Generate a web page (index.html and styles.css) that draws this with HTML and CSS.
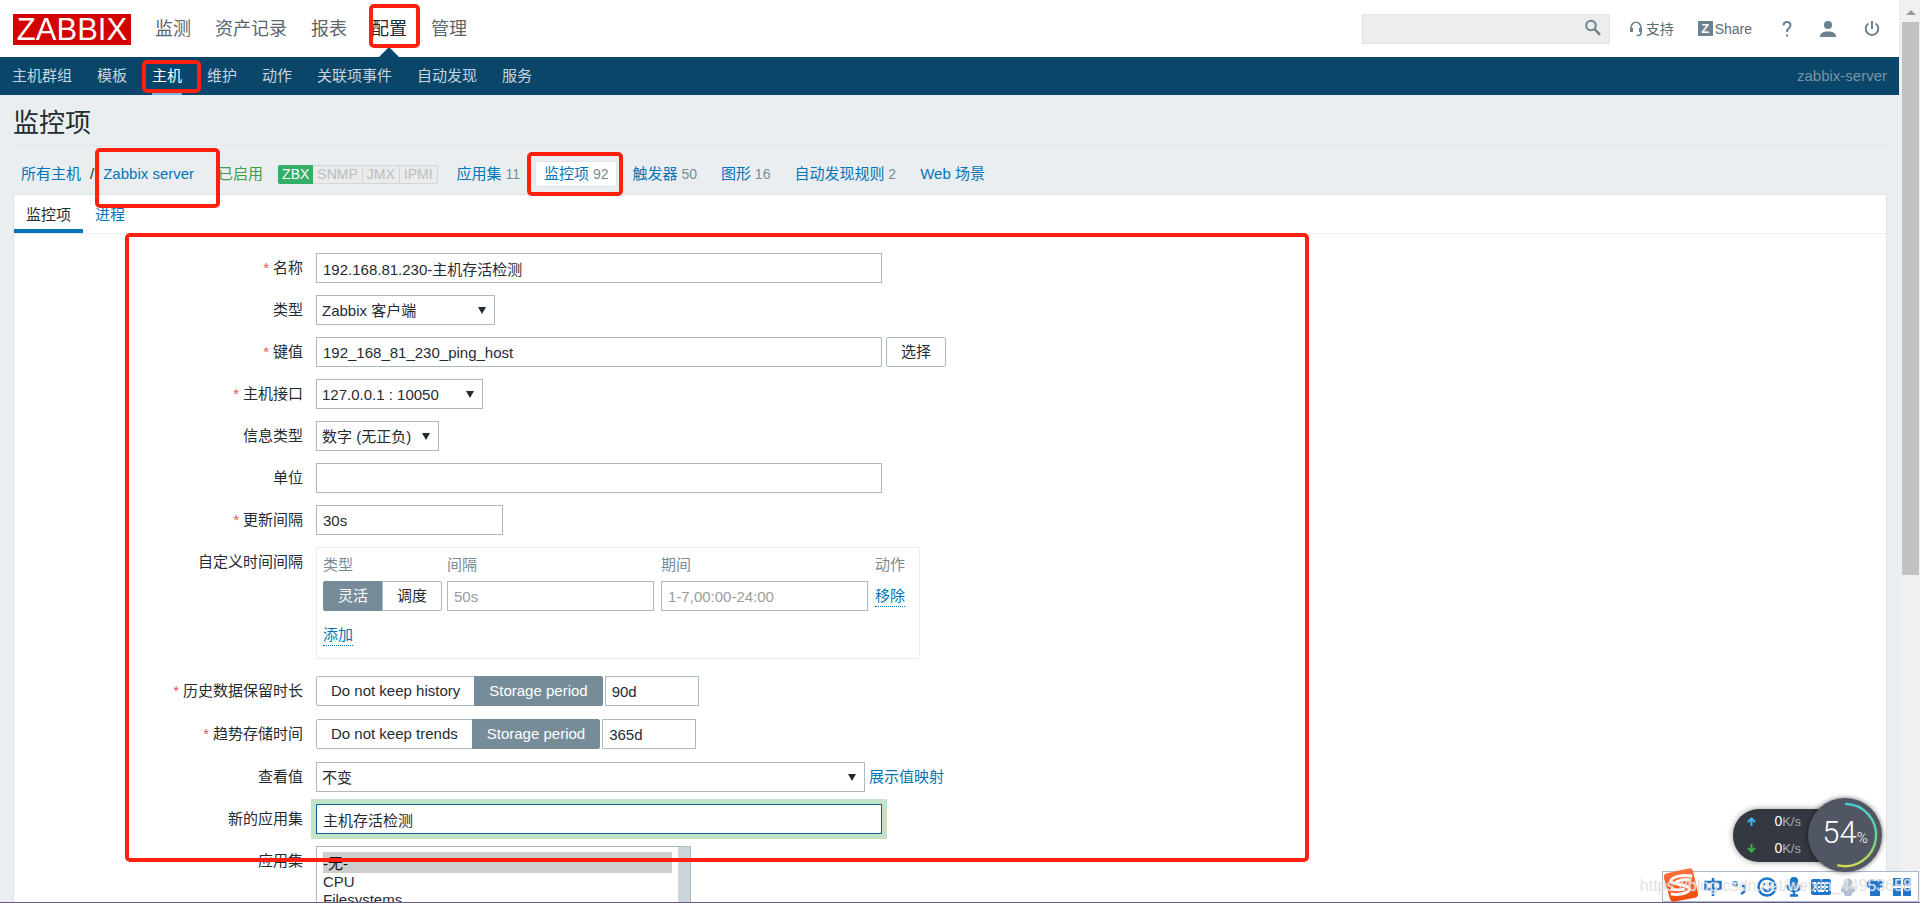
FILE: index.html
```html
<!DOCTYPE html>
<html lang="zh-CN">
<head>
<meta charset="utf-8">
<title>监控项的配置</title>
<link rel="stylesheet" href="styles.css">
</head>
<body>
<div class="viewport">
  <div class="page">
    <header class="top">
      <a class="logo" href="#">ZABBIX</a>
      <nav class="main-nav">
        <a href="#">监测</a><a href="#">资产记录</a><a href="#">报表</a><a href="#" class="active">配置</a><a href="#">管理</a>
      </nav>
      <div class="top-tools">
        <div class="search">
          <input type="text" aria-label="搜索">
          <button type="button" aria-label="搜索">
            <svg width="16" height="17" viewBox="0 0 16 17" fill="none" stroke="#6b8290" stroke-width="2"><circle cx="6" cy="6.500" r="4.800"/><path d="M9.500 10l5.500 5.800" stroke-width="2.500"/></svg>
          </button>
        </div>
        <a class="support" href="#">
          <svg width="14" height="16" viewBox="0 0 14 16" fill="none" stroke="#6b8290" stroke-width="1.600"><path d="M2 10V6.500a5 5.200 0 0 1 10 0V12q0 2.500-3 2.500H7.500"/><path d="M2.500 7v4M11.500 7v4" stroke-width="3"/></svg>
          支持</a>
        <a class="share" href="#"><span class="z-mark">Z</span>Share</a>
        <a class="icon help" href="#" aria-label="帮助"><svg width="10" height="16" viewBox="0 0 10 16" fill="none" stroke="#6b8290" stroke-width="2"><path d="M1.500 4.500C1.500 2.500 3 1 5 1s3.500 1.300 3.500 3.200C8.500 7 5 7 5 11"/><path d="M5 13.500v2"/></svg></a>
        <a class="icon" href="#" aria-label="用户"><svg width="16" height="16" viewBox="0 0 16 16" fill="#6b8290"><circle cx="8" cy="4" r="4"/><path d="M0 16c0-4 3-5.500 8-5.500S16 12 16 16z"/></svg></a>
        <a class="icon" href="#" aria-label="登出"><svg width="16" height="16" viewBox="0 0 16 16" fill="none" stroke="#6b8290" stroke-width="2"><path d="M8 0v8M4.500 2.500a6.300 6.300 0 1 0 7 0"/></svg></a>
      </div>
    </header>
    <nav class="sub-nav">
      <a href="#">主机群组</a><a href="#">模板</a><a href="#" class="active">主机</a><a href="#">维护</a><a href="#">动作</a><a href="#">关联项事件</a><a href="#">自动发现</a><a href="#">服务</a>
      <span class="server-name">zabbix-server</span>
    </nav>
    <main>
      <h1>监控项</h1>
      <div class="crumbs">
        <a href="#">所有主机</a><span class="slash">/</span><a class="host" href="#">Zabbix server</a><span class="enabled">已启用</span>
        <span class="badges"><span class="on">ZBX</span><span>SNMP</span><span>JMX</span><span>IPMI</span></span>
        <span class="crumb"><a href="#">应用集</a> 11</span>
        <span class="crumb current"><a href="#">监控项</a> 92</span>
        <span class="crumb"><a href="#">触发器</a> 50</span>
        <span class="crumb"><a href="#">图形</a> 16</span>
        <span class="crumb"><a href="#">自动发现规则</a> 2</span>
        <span class="crumb"><a href="#">Web 场景</a></span>
      </div>
      <section class="panel">
        <div class="tabs"><a href="#" class="active">监控项</a><a href="#">进程</a></div>
        <form>
          <label for="name" class="required">名称</label>
          <div class="field"><input id="name" class="wide" type="text" value="192.168.81.230-主机存活检测"></div>
          <label for="type">类型</label>
          <div class="field"><span class="select type"><select id="type"><option>Zabbix 客户端</option></select></span></div>
          <label for="key" class="required">键值</label>
          <div class="field"><input id="key" class="wide" type="text" value="192_168_81_230_ping_host"><button type="button" class="plain">选择</button></div>
          <label for="iface" class="required">主机接口</label>
          <div class="field"><span class="select iface"><select id="iface"><option>127.0.0.1 : 10050</option></select></span></div>
          <label for="info">信息类型</label>
          <div class="field"><span class="select info"><select id="info"><option>数字 (无正负)</option></select></span></div>
          <label for="unit">单位</label>
          <div class="field"><input id="unit" class="wide" type="text"></div>
          <label for="delay" class="required">更新间隔</label>
          <div class="field"><input id="delay" class="delay" type="text" value="30s"></div>
          <span class="label">自定义时间间隔</span>
          <div class="field">
            <div class="intervals">
              <table>
                <thead><tr><th>类型</th><th>间隔</th><th>期间</th><th>动作</th></tr></thead>
                <tbody>
                  <tr>
                    <td><div class="segmented"><button type="button" class="on">灵活</button><button type="button">调度</button></div></td>
                    <td><input type="text" placeholder="50s" aria-label="间隔"></td>
                    <td><input type="text" placeholder="1-7,00:00-24:00" aria-label="期间"></td>
                    <td><a class="dotted" href="#">移除</a></td>
                  </tr>
                  <tr><td colspan="4" class="add"><a class="dotted" href="#">添加</a></td></tr>
                </tbody>
              </table>
            </div>
          </div>
          <label for="history" class="required">历史数据保留时长</label>
          <div class="field storage"><div class="segmented"><button type="button">Do not keep history</button><button type="button" class="on">Storage period</button></div><input id="history" class="short" type="text" value="90d"></div>
          <label for="trends" class="required">趋势存储时间</label>
          <div class="field storage"><div class="segmented"><button type="button">Do not keep trends</button><button type="button" class="on">Storage period</button></div><input id="trends" class="short" type="text" value="365d"></div>
          <label for="valuemap">查看值</label>
          <div class="field"><span class="select valuemap"><select id="valuemap"><option>不变</option></select></span><a href="#">展示值映射</a></div>
          <label for="newapp">新的应用集</label>
          <div class="field"><input id="newapp" class="wide focused" type="text" value="主机存活检测"></div>
          <label for="apps">应用集</label>
          <div class="field">
            <div class="apps">
              <select id="apps" multiple size="6">
                <option selected>-无-</option><option>CPU</option><option>Filesystems</option><option>General</option><option>Memory</option><option>Network interfaces</option><option>OS</option><option>Performance</option><option>Processes</option>
              </select>
              <span class="apps-bar"></span>
            </div>
          </div>
        </form>
      </section>
    </main>
  </div>
  <div class="scrollbar"><span class="arrow"></span><span class="thumb"></span></div>

  <div class="mark mark-config"></div>
  <div class="mark mark-hosts"></div>
  <div class="mark mark-server"></div>
  <div class="mark mark-items"></div>
  <div class="mark mark-form"></div>

  <div class="ime">
    <svg class="sogou" width="36" height="36" viewBox="0 0 37 36"><defs><linearGradient id="og" x2="0" y2="1"><stop offset="0" stop-color="#ff7440"/><stop offset="1" stop-color="#f04a08"/></linearGradient></defs><path d="M4 6L26 1q4-1 5 3l5 22q1 4-3 5L12 35q-4 1-5-3L1 11q-1-4 3-5z" fill="url(#og)"/><path d="M30 9C22 7 9 9 8 14c0 4 19 3 19 8 0 4-11 7-19 5M12 16q8-5 17-3M8 22q8 2 14 0" fill="none" stroke="#fff" stroke-width="3"/></svg>
    <svg width="18" height="20" viewBox="0 0 18 20" fill="none" stroke="#1d76cc" stroke-width="2.500"><path d="M1.500 5h15v7h-15zM9 1v18"/></svg>
    <svg width="15" height="18" viewBox="0 0 15 18" fill="none" stroke="#1d76cc" stroke-width="2"><circle cx="3" cy="6" r="2"/><path d="M10 8h3v3q0 3-4 5" stroke-width="2.500"/></svg>
    <svg width="20" height="20" viewBox="0 0 20 20" fill="none" stroke="#1d76cc" stroke-width="2.500"><circle cx="10" cy="10" r="8.500"/><path d="M5 10.500q5 7 10 0"/><path d="M7 5.500v3M13 5.500v3"/></svg>
    <svg width="16" height="20" viewBox="0 0 16 20" fill="none" stroke="#1d76cc" stroke-width="2.500"><rect x="5" y="1" width="6" height="10" rx="3" fill="#1d76cc"/><path d="M1.500 8q0 6 6.500 6t6.500-6M8 14v4M4 18.500h8"/></svg>
    <svg width="20" height="16" viewBox="0 0 20 16"><rect width="20" height="16" rx="2" fill="#1d76cc"/><path d="M3 4h2M7 4h2M11 4h2M15 4h2M3 8h2M7 8h2M11 8h2M15 8h2M3 12h2M7 12h6M15 12h2" stroke="#fff" stroke-width="2"/></svg>
    <svg width="16" height="18" viewBox="0 0 16 18" fill="#b4bfd3"><circle cx="8" cy="5" r="4.500"/><path d="M3 8h10q3 2 2 6h-2l-2 4H5l-2-4H1q-1-4 2-6z"/></svg>
    <svg width="18" height="18" viewBox="0 0 18 18" fill="#1d76cc"><path d="M5 1q4 4 8 0l5 4-2 5-2-1v9H4V9l-2 1-2-5z"/></svg>
    <svg width="18" height="18" viewBox="0 0 18 18" fill="#1d76cc"><path d="M0 0h8v8H0zM0 10h8v8H0zM10 10h8v8h-8z"/><rect x="10" width="8" height="8" rx="3"/></svg>
  </div>
  <div class="watermark">https://blog.csdn.net/weixin_44953658</div>
  <div class="speed">
    <div class="pill">
      <div><svg width="9" height="9" viewBox="0 0 9 9" fill="none" stroke="#42b4f5" stroke-width="2"><path d="M4.500 9V1.500M1 5l3.500-3.500L8 5"/></svg><span><b>0</b>K/s</span></div>
      <div><svg width="9" height="9" viewBox="0 0 9 9" fill="none" stroke="#37b24a" stroke-width="2"><path d="M4.500 0v7.500M1 4l3.500 3.500L8 4"/></svg><span><b>0</b>K/s</span></div>
    </div>
    <div class="ball">
      <svg width="74" height="74" viewBox="0 0 76 76" fill="none"><defs><linearGradient id="arc" x2="0" y2="1"><stop offset="0" stop-color="#48cfd8"/><stop offset=".5" stop-color="#5fd28c"/><stop offset="1" stop-color="#d2d84e"/></linearGradient></defs><path d="M38 6a32 32 0 1 1-8 63" stroke="url(#arc)" stroke-width="2.500"/></svg>
      <span>54<small>%</small></span>
    </div>
  </div>
  <div class="taskbar-edge"></div>
</div>
</body>
</html>
```
FILE: styles.css
```css
* { box-sizing: border-box; }

body {
  margin: 0;
  font: 15px/20px "Liberation Sans", "Noto Sans CJK SC", sans-serif;
  color: #1f2c33;
  background: #ebeef0;
}

a { color: #0275b8; text-decoration: none; }

input, select, button { font: inherit; color: inherit; margin: 0; border-radius: 0; }

.viewport { position: relative; display: flex; height: 100vh; overflow: hidden; }
.page { flex: 1; min-width: 0; }

/* header */
.top { display: flex; align-items: center; height: 57px; padding: 0 19px 0 13px; background: #fff; }
.logo {
  width: 118px; height: 31px; margin-top: 2px;
  background: #d40000; color: #fff;
  font: 31px/32px "Liberation Sans", sans-serif; text-align: center;
}
.main-nav { display: flex; gap: 24px; height: 57px; margin-left: 24px; font-size: 18px; line-height: 59px; }
.main-nav a { position: relative; color: #5a666d; }
.main-nav .active { color: #1f2c33; }
.main-nav .active::after {
  content: ""; position: absolute; left: 50%; bottom: 0; margin-left: -10px;
  border: 10px solid transparent; border-top: 0; border-bottom-color: #0a466a;
}
.top-tools { display: flex; align-items: center; margin-left: auto; }
.top-tools a { display: flex; align-items: center; color: #5d6b73; font-size: 14px; }
.search { display: flex; width: 248px; height: 30px; margin-right: 19px; background: #ededed; border: 1px solid #e3e3e3; }
.search input { flex: 1; min-width: 0; background: none; border: 0; padding: 0 6px; outline: 0; }
.search button { display: flex; align-items: center; justify-content: center; width: 30px; padding: 0 2px 2px 0; background: none; border: 0; }
.support { gap: 3px; }
.share { gap: 2px; margin-left: 24px; }
.z-mark { width: 15px; height: 15px; background: #6b8290; color: #fff; font: bold 13px/15px "Liberation Sans", sans-serif; text-align: center; }
.icon { margin-left: 28px; }
.help { margin-left: 30px; }

.sub-nav { display: flex; gap: 25px; height: 38px; padding: 0 12px; background: #0a466a; line-height: 37px; }
.sub-nav a { color: #c7d5df; }
.sub-nav .active { color: #fff; border-bottom: 3px solid #78b4e0; }
.server-name { margin-left: auto; color: #7b93a3; }

/* title and breadcrumbs */
main { padding: 0 12px 0 13px; }
h1 { margin: 0; height: 51px; border-bottom: 1px solid #dfe4e7; font-size: 26px; font-weight: 400; line-height: 57px; }
.crumbs { display: flex; align-items: center; height: 48px; padding: 8px 0 0 8px; white-space: nowrap; }
.slash { margin: 0 9px; }
.enabled { margin-left: 24px; color: #429e47; }
.badges { display: flex; margin: 0 10px 0 15px; height: 19px; font-size: 14px; line-height: 17px; color: #b8c0c4; border: 1px solid #d0d6d9; border-radius: 2px; background: #ebebeb; }
.badges span { padding: 0 4px; border-left: 1px solid #d0d6d9; }
.badges .on { margin: -1px 0 -1px -1px; padding: 1px 4px; background: #34af67; color: #fff; border: 0; border-radius: 2px 0 0 2px; }
.badges .on + span { border-left: 0; }
.crumb { margin-right: 6px; padding: 2px 8px; color: #768d99; font-size: 14px; border: 1px solid transparent; }
.crumb a { font-size: 15px; }
.current { background: #fff; border: 1px solid #dfe4e7; border-radius: 2px; }

/* item form */
.panel { height: 900px; background: #fff; border: 1px solid #dfe4e7; }
.tabs { display: flex; height: 39px; border-bottom: 1px solid #ebeef0; line-height: 39px; }
.tabs a { height: 38px; padding: 0 12px; }
.tabs .active { color: #1f2c33; border-bottom: 4px solid #0275b8; }

form { display: grid; grid-template-columns: 289px 1fr; column-gap: 13px; row-gap: 12px; padding-top: 19px; }
form > label, .label { line-height: 30px; text-align: right; }
.required::before { content: "*"; margin-right: 4px; color: #e45959; }
.field { display: flex; align-items: center; gap: 4px; }
.storage { gap: 2px; padding-bottom: 1px; }
.field input, .select { width: 187px; height: 30px; border: 1px solid #acbbc2; background: #fff; }
.field input { padding: 0 6px; outline: 0; }
.field input::placeholder { color: #9c9c9c; }
.field .wide { width: 566px; }
.field .short { width: 94px; }
.select { position: relative; }
.select::after {
  content: ""; position: absolute; right: 8px; top: 11px;
  border: 4px solid transparent; border-top: 7px solid #1f2c33; border-bottom: 0;
}
.select select { appearance: none; width: 100%; height: 28px; padding: 1px 5px 0; background: none; border: 0; outline: 0; }
.select.type { width: 179px; }
.select.iface { width: 167px; }
.select.info { width: 123px; }
.select.valuemap { width: 549px; }
.field .focused { border-color: #0a64a0; box-shadow: 0 0 0 5px #c4e3c6; }

.plain { width: 60px; height: 30px; padding: 0; background: #fff; border: 1px solid #acbbc2; border-radius: 2px; }
.segmented { display: flex; }
.segmented button { height: 30px; padding: 0 14px; background: #fff; border: 1px solid #acbbc2; border-radius: 2px 0 0 2px; }
.segmented button:last-child { margin-left: -1px; border-radius: 0 2px 2px 0; }
.segmented .on { background: #768d99; border-color: #768d99; color: #fff; }

.intervals { width: 604px; height: 112px; margin-bottom: 5px; padding: 7px 6px; border: 1px solid #ebeef0; }
table { border-collapse: collapse; }
th { height: 20px; padding: 0; color: #768d99; font-weight: 400; text-align: left; }
td { padding: 6px 7px 0 0; }
td:first-child { padding-right: 5px; }
.field td input { width: 207px; }
.field .add { padding-top: 14px; }
.dotted { display: inline-block; border-bottom: 1px dotted #0275b8; }

.apps { display: flex; width: 375px; height: 150px; border: 1px solid #acbbc2; background: #fff; }
.apps select { flex: 1; min-width: 0; padding: 5px 6px; border: 0; background: none; outline: 0; }
.apps option { min-height: 18px; padding: 0; line-height: 18px; }
.apps-bar { width: 12px; background: #ccd5da; }

/* window scrollbar */
.scrollbar { display: flex; flex-direction: column; align-items: center; width: 21px; padding-top: 10px; background: #f0f0f0; border-left: 2px solid #e9eef0; }
.arrow { border: 5px solid transparent; border-top: 0; border-bottom-color: #9a9a9a; }
.thumb { width: 17px; height: 553px; margin-top: 7px; background: #c1c1c1; }

/* highlight frames */
.mark { position: absolute; border: 4px solid #ff2010; border-radius: 5px; pointer-events: none; }
.mark-config { left: 369px; top: 4px; width: 51px; height: 44px; }
.mark-hosts { left: 142px; top: 60px; width: 59px; height: 33px; }
.mark-server { left: 95px; top: 148px; width: 125px; height: 60px; }
.mark-items { left: 527px; top: 152px; width: 96px; height: 44px; }
.mark-form { left: 125px; top: 233px; width: 1184px; height: 629px; }

/* desktop widgets */
.ime {
  position: absolute; right: 1px; bottom: 1px;
  display: grid; grid-template-columns: 36px repeat(8, 27px); grid-template-rows: 29px; align-items: center; justify-items: center;
  width: 257px; height: 31px; background: #fff; border: 1px solid #a9b8cc;
}
.sogou { margin-bottom: 4px; }
.watermark { position: absolute; right: 8px; bottom: 7px; color: rgba(205, 205, 205, .6); font-size: 16px; text-shadow: 0 0 1px #fff; }
.speed { position: absolute; right: 38px; bottom: 31px; display: flex; align-items: center; }
.pill {
  display: flex; flex-direction: column; justify-content: space-around; width: 100px; height: 53px; margin-right: -25px; padding: 0 32px 0 14px;
  background: #333841; border-radius: 26px 0 0 26px; box-shadow: 0 0 6px rgba(0, 0, 0, .4); color: #a8adb6; font-size: 13px;
}
.pill div { display: flex; align-items: center; justify-content: space-between; }
.pill b { color: #fff; font-size: 14px; font-weight: 400; }
.ball {
  position: relative; display: flex; align-items: center; justify-content: center; width: 74px; height: 74px;
  border-radius: 50%; background: #515664; box-shadow: 0 0 5px rgba(0, 0, 0, .6); color: #fff; font: 300 31px/40px Roboto, sans-serif;
}
.ball svg { position: absolute; left: 0; top: 0; }
.ball small { font-size: 15px; }
.taskbar-edge { position: absolute; left: 0; right: 0; bottom: 0; height: 1px; background: #6d5a8c; }
```
